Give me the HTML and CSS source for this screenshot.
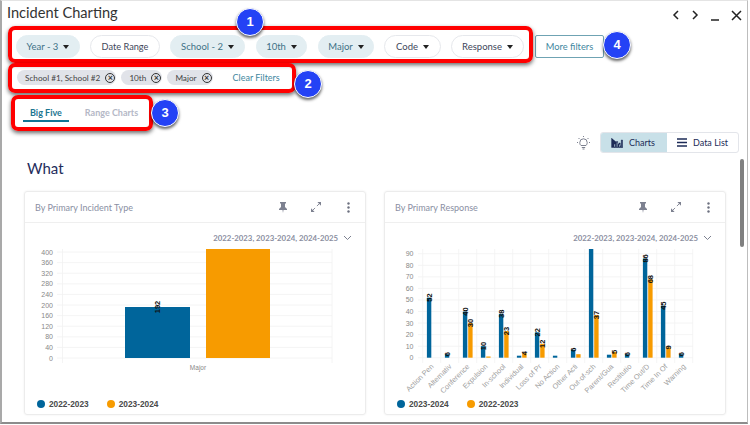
FILE: index.html
```html
<!DOCTYPE html>
<html lang="en">
<head>
  <meta charset="UTF-8">
  <meta name="viewport" content="width=device-width, initial-scale=1.0">
  <title>Incident Charting</title>
  <link rel="stylesheet" href="styles.css">
</head>
<body>
  <div class="window">
    <header class="title-bar">
      <h1>Incident Charting</h1>
      <div class="window-actions">
        <svg width="8" height="10" viewBox="0 0 8 10"><path d="M6 1 2 5l4 4" class="stroke-dark"/></svg>
        <svg width="8" height="10" viewBox="0 0 8 10"><path d="M2 1l4 4-4 4" class="stroke-dark"/></svg>
        <svg width="10" height="12" viewBox="0 0 10 12"><path d="M1 11h8" class="stroke-dark"/></svg>
        <svg width="11" height="11" viewBox="0 0 11 11"><path d="M1 1l9 9M10 1l-9 9" class="stroke-dark"/></svg>
      </div>
    </header>

    <div class="filters">
      <button class="pill pill-active pill-year">Year - 3<i class="caret"></i></button>
      <button class="pill pill-date">Date Range</button>
      <button class="pill pill-active pill-school">School - 2<i class="caret"></i></button>
      <button class="pill pill-active pill-grade">10th<i class="caret"></i></button>
      <button class="pill pill-active pill-major">Major<i class="caret"></i></button>
      <button class="pill pill-code">Code<i class="caret"></i></button>
      <button class="pill pill-response">Response<i class="caret"></i></button>
      <button class="more-filters">More filters</button>
    </div>

    <div class="chips">
      <span class="chip">School #1, School #2<i class="chip-x">&times;</i></span>
      <span class="chip">10th<i class="chip-x">&times;</i></span>
      <span class="chip">Major<i class="chip-x">&times;</i></span>
      <a class="clear-filters">Clear Filters</a>
    </div>

    <nav class="tabs">
      <a class="tab tab-active">Big Five</a>
      <a class="tab">Range Charts</a>
    </nav>

    <div class="view-bar">
      <svg class="bulb" width="15" height="14" viewBox="0 0 15 14">
        <path d="M5 9.500C3.800 8.500 3.800 7.500 3.800 6.500a3.700 3.700 0 0 1 7.400 0c0 1-.3 2-1.200 3zM5.800 11.500h3.400M6.500 13h2M1 6.500h1M13 6.500h1M2.500 2l1 1M12.500 2l-1 1M7.500 0v1" class="stroke-grey"/>
      </svg>
      <div class="toggle">
        <a class="toggle-item toggle-active">
          <svg width="12" height="10" viewBox="0 0 12 10"><path d="M.6 0v9.400H12M3 9V6h1.200v3zM5.500 9V3.500h1.200V9zM8 9V5h1.200v4zM10.300 9V2h1.200v7z" fill="#1c2b57" stroke="#1c2b57" stroke-width=".5"/></svg>
          Charts
        </a>
        <a class="toggle-item">
          <svg width="10" height="9" viewBox="0 0 10 9"><path d="M0 1h10M0 4.500h10M0 8h10" stroke="#1c2b57" stroke-width="1.300" fill="none"/></svg>
          Data List
        </a>
      </div>
    </div>

    <h2 class="section-title">What</h2>

    <div class="cards">
      <section class="card">
        <div class="card-head">
          <span>By Primary Incident Type</span>
          <div class="card-icons">
            <svg width="10" height="11" viewBox="0 0 10 11"><path d="M2 0h6v1L7 2v3l2 2v1H5.500L5 11l-.5-3H1V7l2-2V2L2 1z" fill="#7d8190"/></svg>
            <svg width="10" height="10" viewBox="0 0 11 11"><path d="M10 1 6.500 4.500M1 10l3.500-3.500" class="stroke-grey"/><path d="M7 0h4v4zM0 7v4h4z" fill="#7d8190"/></svg>
            <svg class="kebab" width="3" height="11" viewBox="0 0 3 11"><circle cx="1.500" cy="1.500" r="1.200" fill="#6d7180"/><circle cx="1.500" cy="5.500" r="1.200" fill="#6d7180"/><circle cx="1.500" cy="9.500" r="1.200" fill="#6d7180"/></svg>
          </div>
        </div>
        <div class="range-row">
          2022-2023, 2023-2024, 2024-2025
          <svg width="9" height="6" viewBox="0 0 9 6"><path d="M1 1l3.500 3.500L8 1" class="stroke-grey"/></svg>
        </div>
        <svg class="chart" width="339" height="148" viewBox="25 248 339 148">
          <path class="grid" d="M57 252h275M57 262.600h275M57 273.200h275M57 283.800h275M57 294.400h275M57 305h275M57 315.600h275M57 326.200h275M57 336.800h275M57 347.400h275M57 358h275M62.500 249v114M332 249v114"/>
          <g class="axis">
            <text x="53" y="254.500">400</text><text x="53" y="265">360</text><text x="53" y="275.700">320</text>
            <text x="53" y="286.300">280</text><text x="53" y="296.900">240</text><text x="53" y="307.500">200</text>
            <text x="53" y="318.100">160</text><text x="53" y="328.700">120</text><text x="53" y="339.300">80</text>
            <text x="53" y="349.900">40</text><text x="53" y="360.500">0</text>
          </g>
          <rect class="blue" x="125" y="307" width="65" height="51"/>
          <rect class="orange" x="206" y="249" width="64" height="109"/>
          <text class="val" transform="translate(157.500,307) rotate(-90)">192</text>
          <text class="axis-x" x="198" y="369.500">Major</text>
        </svg>
        <div class="legend">
          <span class="legend-item"><i class="dot dot-blue"></i>2022-2023</span>
          <span class="legend-item"><i class="dot dot-orange"></i>2023-2024</span>
        </div>
      </section>

      <section class="card">
        <div class="card-head">
          <span>By Primary Response</span>
          <div class="card-icons">
            <svg width="10" height="11" viewBox="0 0 10 11"><path d="M2 0h6v1L7 2v3l2 2v1H5.500L5 11l-.5-3H1V7l2-2V2L2 1z" fill="#7d8190"/></svg>
            <svg width="10" height="10" viewBox="0 0 11 11"><path d="M10 1 6.500 4.500M1 10l3.500-3.500" class="stroke-grey"/><path d="M7 0h4v4zM0 7v4h4z" fill="#7d8190"/></svg>
            <svg class="kebab" width="3" height="11" viewBox="0 0 3 11"><circle cx="1.500" cy="1.500" r="1.200" fill="#6d7180"/><circle cx="1.500" cy="5.500" r="1.200" fill="#6d7180"/><circle cx="1.500" cy="9.500" r="1.200" fill="#6d7180"/></svg>
          </div>
        </div>
        <div class="range-row">
          2022-2023, 2023-2024, 2024-2025
          <svg width="9" height="6" viewBox="0 0 9 6"><path d="M1 1l3.500 3.500L8 1" class="stroke-grey"/></svg>
        </div>
        <svg class="chart" width="339" height="148" viewBox="385 248 339 148">
          <path class="grid" d="M418 253.700h275M418 265.300h275M418 276.800h275M418 288.400h275M418 299.900h275M418 311.500h275M418 323h275M418 334.600h275M418 346.200h275M418 357.700h275
            M422.700 249v114M440.700 249v114M458.700 249v114M476.700 249v114M494.700 249v114M512.700 249v114M530.700 249v114M548.700 249v114M566.700 249v114M584.700 249v114M602.700 249v114M620.700 249v114M638.700 249v114M656.700 249v114M674.700 249v114M692.700 249v114"/>
          <g class="axis">
            <text x="413.500" y="256.200">90</text><text x="413.500" y="267.800">80</text><text x="413.500" y="279.300">70</text>
            <text x="413.500" y="290.900">60</text><text x="413.500" y="302.400">50</text><text x="413.500" y="314">40</text>
            <text x="413.500" y="325.500">30</text><text x="413.500" y="337.100">20</text><text x="413.500" y="348.700">10</text>
            <text x="413.500" y="360.200">0</text>
          </g>
          <g class="blue">
            <rect x="426.900" y="297.600" width="4.400" height="60.100"/>
            <rect x="444.900" y="354.200" width="4.400" height="3.500"/>
            <rect x="462.900" y="311.500" width="4.400" height="46.200"/>
            <rect x="480.900" y="346.100" width="4.400" height="11.600"/>
            <rect x="498.900" y="313.800" width="4.400" height="43.900"/>
            <rect x="516.900" y="355.700" width="4.400" height="2"/>
            <rect x="534.900" y="332.300" width="4.400" height="25.400"/>
            <rect x="552.900" y="355.700" width="4.400" height="2"/>
            <rect x="570.900" y="349.700" width="4.400" height="8"/>
            <rect x="588.900" y="249" width="4.400" height="108.700"/>
            <rect x="606.900" y="354.700" width="4.400" height="3"/>
            <rect x="624.900" y="354.200" width="4.400" height="3.500"/>
            <rect x="642.900" y="258.400" width="4.400" height="99.300"/>
            <rect x="660.900" y="305.700" width="4.400" height="52"/>
            <rect x="678.900" y="354.200" width="4.400" height="3.500"/>
          </g>
          <g class="orange">
            <rect x="468.200" y="323" width="4.400" height="34.700"/>
            <rect x="486.200" y="356.500" width="4.400" height="1.200"/>
            <rect x="504.200" y="331.100" width="4.400" height="26.600"/>
            <rect x="522.200" y="353.100" width="4.400" height="4.600"/>
            <rect x="540.200" y="343.800" width="4.400" height="13.900"/>
            <rect x="576.200" y="354.200" width="4.400" height="3.500"/>
            <rect x="594.200" y="315" width="4.400" height="42.700"/>
            <rect x="612.200" y="351.900" width="4.400" height="5.800"/>
            <rect x="648.200" y="279.200" width="4.400" height="78.500"/>
            <rect x="666.200" y="347.300" width="4.400" height="10.400"/>
          </g>
          <g>
            <text class="val" transform="translate(429.100,297.600) rotate(-90)">52</text>
            <text class="val" transform="translate(447.100,354.200) rotate(-90)">6</text>
            <text class="val" transform="translate(465.100,311.500) rotate(-90)">40</text>
            <text class="val" transform="translate(470.400,323) rotate(-90)">30</text>
            <text class="val" transform="translate(483.100,346.100) rotate(-90)">10</text>
            <text class="val" transform="translate(501.100,313.800) rotate(-90)">38</text>
            <text class="val" transform="translate(506.400,331.100) rotate(-90)">23</text>
            <text class="val" transform="translate(524.400,353.100) rotate(-90)">4</text>
            <text class="val" transform="translate(537.100,332.300) rotate(-90)">22</text>
            <text class="val" transform="translate(542.400,343.800) rotate(-90)">12</text>
            <text class="val" transform="translate(573.100,349.700) rotate(-90)">6</text>
            <text class="val" transform="translate(596.400,315) rotate(-90)">37</text>
            <text class="val" transform="translate(614.400,351.900) rotate(-90)">5</text>
            <text class="val" transform="translate(627.100,354.200) rotate(-90)">6</text>
            <text class="val" transform="translate(645.100,258.400) rotate(-90)">86</text>
            <text class="val" transform="translate(650.400,279.200) rotate(-90)">68</text>
            <text class="val" transform="translate(663.100,305.700) rotate(-90)">45</text>
            <text class="val" transform="translate(668.400,347.300) rotate(-90)">9</text>
            <text class="val" transform="translate(681.100,354.200) rotate(-90)">6</text>
          </g>
          <g class="axis-rot">
            <text transform="translate(434,367) rotate(-45)">Action Pen</text>
            <text transform="translate(452,367) rotate(-45)">Alternativ</text>
            <text transform="translate(470,367) rotate(-45)">Conference</text>
            <text transform="translate(488,367) rotate(-45)">Expulsion</text>
            <text transform="translate(506,367) rotate(-45)">In-school</text>
            <text transform="translate(524,367) rotate(-45)">Individual</text>
            <text transform="translate(542,367) rotate(-45)">Loss of Pr</text>
            <text transform="translate(560,367) rotate(-45)">No Action</text>
            <text transform="translate(578,367) rotate(-45)">Other Acti</text>
            <text transform="translate(596,367) rotate(-45)">Out-of-sch</text>
            <text transform="translate(614,367) rotate(-45)">Parent/Gua</text>
            <text transform="translate(632,367) rotate(-45)">Restitutio</text>
            <text transform="translate(650,367) rotate(-45)">Time Out/D</text>
            <text transform="translate(668,367) rotate(-45)">Time In Of</text>
            <text transform="translate(686,367) rotate(-45)">Warning</text>
          </g>
        </svg>
        <div class="legend">
          <span class="legend-item"><i class="dot dot-blue"></i>2023-2024</span>
          <span class="legend-item"><i class="dot dot-orange"></i>2022-2023</span>
        </div>
      </section>
    </div>

    <div class="scroll-thumb"></div>
  </div>

  <!-- annotation overlays -->
  <div class="callout callout-1"></div>
  <div class="callout callout-2"></div>
  <div class="callout callout-3"></div>
  <div class="badge badge-1">1</div>
  <div class="badge badge-2">2</div>
  <div class="badge badge-3">3</div>
  <div class="badge badge-4">4</div>
</body>
</html>
```

FILE: styles.css
```css
* {
  box-sizing: border-box;
}
body {
  margin: 0;
  width: 750px;
  height: 425px;
  overflow: hidden;
  background-color: white;
  font-family: Lato, "Liberation Sans", sans-serif;
  color: #3d4257;
}
.window {
  position: relative;
  width: 748px;
  height: 424px;
  border-top: 1px solid #e4e4e4;
  border-left: 2px solid #a9a9a9;
  border-right: 1px solid #bdbdbd;
  border-bottom: 2px solid #8c8c8c;
  overflow: hidden;
  background-color: white;
}
.stroke-dark {
  fill: none;
  stroke: #222;
  stroke-width: 1.5;
}
.stroke-grey {
  fill: none;
  stroke: #7d8190;
  stroke-width: 1;
}

/* title */
.title-bar {
  display: flex;
  justify-content: space-between;
  align-items: center;
  height: 22px;
  padding: 0 5px;
}
.title-bar h1 {
  margin: 0;
  font-size: 14.6px;
  font-weight: 400;
  color: #333;
}
.window-actions {
  display: flex;
  align-items: center;
  gap: 11px;
  padding-top: 6px;
}

/* filters */
.filters {
  display: flex;
  align-items: center;
  gap: 10px;
  height: 23px;
  margin-top: 12px;
  padding-left: 14px;
}
.pill {
  display: flex;
  align-items: center;
  justify-content: center;
  gap: 5px;
  height: 23px;
  padding: 0;
  border: 1px solid #e6e8ec;
  border-radius: 12px;
  background-color: white;
  font-family: inherit;
  font-size: 9.5px;
  color: #41465a;
}
.pill-active {
  border-color: #e3eef2;
  background-color: #e3eef2;
  color: #3e7186;
}
.pill-year { width: 64px; }
.pill-date { width: 70px; font-size: 9.2px; }
.pill-school { width: 75px; }
.pill-grade { width: 51px; margin-left: 1px; }
.pill-major { width: 56px; margin-left: 1px; }
.pill-code { width: 57px; }
.pill-response { width: 73px; }
.caret {
  width: 0;
  height: 0;
  border-left: 3.5px solid transparent;
  border-right: 3.5px solid transparent;
  border-top: 4px solid #222;
}
.more-filters {
  width: 69px;
  height: 23px;
  margin-left: 1px;
  padding: 0;
  border: 1px solid #6fa3b3;
  border-radius: 2px;
  background-color: white;
  font-family: inherit;
  font-size: 9.3px;
  color: #3f87a0;
}

/* chips */
.chips {
  display: flex;
  align-items: center;
  gap: 5px;
  height: 15px;
  margin-top: 12px;
  padding-left: 15px;
}
.chip {
  display: flex;
  align-items: center;
  gap: 5px;
  height: 15px;
  padding: 0 1px 0 8px;
  border-radius: 8px;
  background-color: #e1e3e9;
  font-size: 8.2px;
  white-space: nowrap;
  color: #444;
}
.chip-x {
  width: 10px;
  height: 10px;
  border: 1.2px solid #333;
  border-radius: 50%;
  font-size: 9px;
  font-style: normal;
  font-weight: 700;
  line-height: 7px;
  text-align: center;
  color: #333;
}
.clear-filters {
  margin-left: 15px;
  font-size: 9px;
  color: #3f87a0;
}

/* tabs */
.tabs {
  display: flex;
  gap: 9px;
  height: 27px;
  margin-top: 10px;
  padding-left: 21px;
}
.tab {
  padding: 12px 7px 0;
  font-size: 9px;
  font-weight: 700;
  color: #b4b8c6;
}
.tab-active {
  border-bottom: 2px solid #0f7596;
  color: #1c7590;
}

/* charts / data list switch */
.view-bar {
  display: flex;
  justify-content: flex-end;
  align-items: center;
  gap: 9px;
  height: 21px;
  margin-top: 10px;
  padding-right: 8px;
}
.toggle {
  display: flex;
  width: 139px;
  height: 21px;
  border: 1px solid #e3e5ea;
  border-radius: 3px;
  overflow: hidden;
}
.toggle-item {
  display: flex;
  flex: 1;
  align-items: center;
  gap: 6px;
  padding-left: 10px;
  font-size: 9px;
  color: #1c2b57;
}
.toggle-active {
  flex: 0 0 66px;
  background-color: #c8e0e8;
}

.section-title {
  margin: 4px 0 0 25px;
  font-size: 15px;
  font-weight: 400;
  line-height: 22px;
  color: #1f2d5c;
}

/* cards */
.cards {
  display: flex;
  gap: 18px;
  margin-top: 12px;
  padding-left: 22px;
}
.card {
  width: 342px;
  height: 224px;
  border: 1px solid #ececec;
  border-radius: 3px;
  box-shadow: 0 0 2px rgba(0, 0, 0, 0.08);
}
.card-head {
  display: flex;
  justify-content: space-between;
  align-items: center;
  height: 31px;
  padding: 0 15px 0 10px;
  border-bottom: 1px solid #efefef;
  font-size: 9px;
  color: #8a8fa3;
}
.card-icons {
  display: flex;
  align-items: center;
  gap: 23px;
}
.kebab {
  margin-left: 3px;
}
.range-row {
  display: flex;
  justify-content: flex-end;
  align-items: center;
  gap: 5px;
  height: 25px;
  padding: 4px 13px 0 0;
  font-size: 7.8px;
  font-weight: 700;
  color: #8a8ea0;
}
.chart {
  display: block;
}
.grid {
  fill: none;
  stroke: #f1f1f1;
  stroke-width: .8;
}
.axis text {
  font-family: "Liberation Sans", sans-serif;
  font-size: 7px;
  text-anchor: end;
  fill: #888;
}
.axis-x {
  font-family: "Liberation Sans", sans-serif;
  font-size: 6.5px;
  text-anchor: middle;
  fill: #888;
}
.axis-rot text {
  font-family: "Liberation Sans", sans-serif;
  font-size: 7.3px;
  text-anchor: end;
  fill: #a0a0a0;
}
.val {
  font-family: "Liberation Sans", sans-serif;
  font-size: 7.5px;
  font-weight: 700;
  text-anchor: middle;
  dominant-baseline: central;
  fill: #111;
}
.blue {
  fill: #00659b;
}
.orange {
  fill: #f79b00;
}
.legend {
  display: flex;
  gap: 18px;
  padding: 3px 0 0 12px;
}
.legend-item {
  display: flex;
  align-items: center;
  gap: 4px;
  font-family: "Liberation Sans", sans-serif;
  font-size: 8.3px;
  font-weight: 700;
  color: #4a4a4a;
}
.dot {
  width: 8px;
  height: 8px;
  border-radius: 50%;
}
.dot-blue {
  background-color: #00659b;
}
.dot-orange {
  background-color: #f79b00;
}
.scroll-thumb {
  position: absolute;
  top: 158px;
  right: 3px;
  width: 4px;
  height: 88px;
  border-radius: 2px;
  background-color: #808080;
}

/* annotations drawn over the screenshot */
.callout {
  position: absolute;
  border: 4px solid #f00;
  border-radius: 7px;
  box-shadow: 0 2px 4px rgba(0, 0, 0, 0.6);
}
.callout-1 {
  left: 8px;
  top: 26px;
  width: 525px;
  height: 37px;
}
.callout-2 {
  left: 8px;
  top: 63px;
  width: 288px;
  height: 30px;
}
.callout-3 {
  left: 11px;
  top: 95px;
  width: 142px;
  height: 36px;
}
.badge {
  position: absolute;
  width: 28px;
  height: 28px;
  border: 1px solid white;
  border-radius: 50%;
  background-color: #2442f5;
  box-shadow: 0 2px 3px rgba(0, 0, 0, 0.6);
  font-family: "Liberation Sans", sans-serif;
  font-size: 13px;
  font-weight: 700;
  line-height: 26px;
  text-align: center;
  color: white;
}
.badge-1 { left: 236px; top: 8px; }
.badge-2 { left: 294px; top: 70px; }
.badge-3 { left: 151px; top: 99px; }
.badge-4 { left: 603px; top: 31px; }
```
